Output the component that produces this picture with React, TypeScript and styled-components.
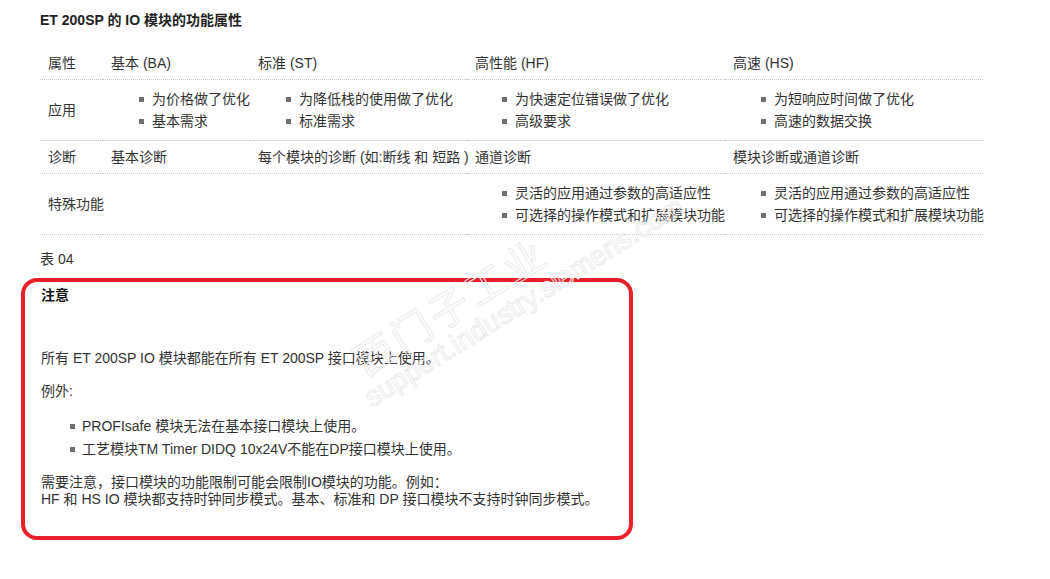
import React from "react";
import styled, { createGlobalStyle } from "styled-components";

const Global = createGlobalStyle`
  html, body { margin: 0; padding: 0; background: #fff; }
  body {
    font-family: "Liberation Sans", "Noto Sans CJK SC", Arial, sans-serif;
    font-size: 14px;
    color: #333;
  }
`;

const Page = styled.div`
  position: relative;
  width: 1050px;
  height: 579px;
  overflow: hidden;
  padding: 10px 0 0 40px;
  box-sizing: border-box;
`;

const Title = styled.h3`
  margin: 0;
  font-size: 14px;
  line-height: 20px;
  font-weight: bold;
  color: #222;
`;

const Table = styled.table`
  margin-top: 17px;
  width: 943px;
  border-collapse: collapse;
  table-layout: fixed;
`;

const Row = styled.tr`
  border-bottom: 1px dotted #c4c4c4;
`;

const Cell = styled.td`
  padding: 6px 8px;
  line-height: 20px;
  vertical-align: middle;
  text-align: left;
  font-weight: normal;
  white-space: nowrap;
`;

const BulletList = styled.ul<{ $indent?: number; $line?: number }>`
  list-style: none;
  margin: 2px 0;
  padding: 0 0 0 ${(p) => p.$indent ?? 41}px;
  li {
    position: relative;
    line-height: ${(p) => p.$line ?? 22}px;
  }
  li::before {
    content: "";
    position: absolute;
    left: -13px;
    top: 50%;
    width: 5px;
    height: 5px;
    margin-top: -2px;
    background: #6e6e6e;
  }
`;

const Caption = styled.p`
  margin: 14px 0 0;
  line-height: 20px;
`;

const Note = styled.div`
  margin: 9px 0 0 -19px;
  width: 612px;
  height: 262px;
  box-sizing: border-box;
  border: 4px solid #e8202a;
  border-radius: 16px;
  padding: 3px 16px 0;
`;

const NoteHeading = styled.div`
  font-weight: bold;
  color: #111;
  line-height: 20px;
`;

const NoteText = styled.p<{ $mt: number; $line?: number }>`
  margin: ${(p) => p.$mt}px 0 0;
  line-height: ${(p) => p.$line ?? 20}px;
`;

const NoteList = styled(BulletList)`
  margin: 15px 0 0;
  li + li { margin-top: 3px; }
  li { line-height: 20px; }
  li::before { left: -12px; }
`;

const Watermark = styled.div`
  position: absolute;
  left: 336px;
  top: 350px;
  transform-origin: 0 0;
  transform: rotate(-32deg);
  pointer-events: none;
  color: transparent;
  -webkit-text-stroke: 1px #ececec;
  white-space: nowrap;
`;

const WaterBig = styled.div`
  font-size: 40px;
  line-height: 44px;
  font-family: "Noto Sans CJK SC", sans-serif;
  letter-spacing: 4px;
  padding-left: 10px;
`;

const WaterSmall = styled.div`
  font-size: 28px;
  line-height: 30px;
  font-family: "Liberation Sans", sans-serif;
`;

const cols = [63, 147, 217, 258, 258];

export default function App() {
  return (
    <>
      <Global />
      <Page>
        <Title>ET 200SP 的 IO 模块的功能属性</Title>
        <Table>
          <colgroup>
            {cols.map((w, i) => (
              <col key={i} style={{ width: w }} />
            ))}
          </colgroup>
          <tbody>
            <Row>
              <Cell>属性</Cell>
              <Cell>基本 (BA)</Cell>
              <Cell>标准 (ST)</Cell>
              <Cell>高性能 (HF)</Cell>
              <Cell>高速 (HS)</Cell>
            </Row>
            <Row>
              <Cell>应用</Cell>
              <Cell>
                <BulletList>
                  <li>为价格做了优化</li>
                  <li>基本需求</li>
                </BulletList>
              </Cell>
              <Cell>
                <BulletList>
                  <li>为降低栈的使用做了优化</li>
                  <li>标准需求</li>
                </BulletList>
              </Cell>
              <Cell>
                <BulletList $indent={40}>
                  <li>为快速定位错误做了优化</li>
                  <li>高级要求</li>
                </BulletList>
              </Cell>
              <Cell>
                <BulletList>
                  <li>为短响应时间做了优化</li>
                  <li>高速的数据交换</li>
                </BulletList>
              </Cell>
            </Row>
            <Row>
              <Cell>诊断</Cell>
              <Cell>基本诊断</Cell>
              <Cell>每个模块的诊断 (如:断线 和 短路 )</Cell>
              <Cell>通道诊断</Cell>
              <Cell>模块诊断或通道诊断</Cell>
            </Row>
            <Row>
              <Cell colSpan={3}>特殊功能</Cell>
              <Cell>
                <BulletList $indent={40}>
                  <li>灵活的应用通过参数的高适应性</li>
                  <li>可选择的操作模式和扩展模块功能</li>
                </BulletList>
              </Cell>
              <Cell>
                <BulletList>
                  <li>灵活的应用通过参数的高适应性</li>
                  <li>可选择的操作模式和扩展模块功能</li>
                </BulletList>
              </Cell>
            </Row>
          </tbody>
        </Table>
        <Caption>表 04</Caption>
        <Note>
          <NoteHeading>注意</NoteHeading>
          <NoteText $mt={43}>所有 ET 200SP IO 模块都能在所有 ET 200SP 接口模块上使用。</NoteText>
          <NoteText $mt={13}>例外:</NoteText>
          <NoteList $indent={41}>
            <li>PROFIsafe 模块无法在基本接口模块上使用。</li>
            <li>工艺模块TM Timer DIDQ 10x24V不能在DP接口模块上使用。</li>
          </NoteList>
          <NoteText $mt={15} $line={17}>
            需要注意，接口模块的功能限制可能会限制IO模块的功能。例如：
            <br />
            HF 和 HS IO 模块都支持时钟同步模式。基本、标准和 DP 接口模块不支持时钟同步模式。
          </NoteText>
        </Note>
        <Watermark>
          <WaterBig>西门子工业</WaterBig>
          <WaterSmall>support.industry.siemens.com</WaterSmall>
        </Watermark>
      </Page>
    </>
  );
}
